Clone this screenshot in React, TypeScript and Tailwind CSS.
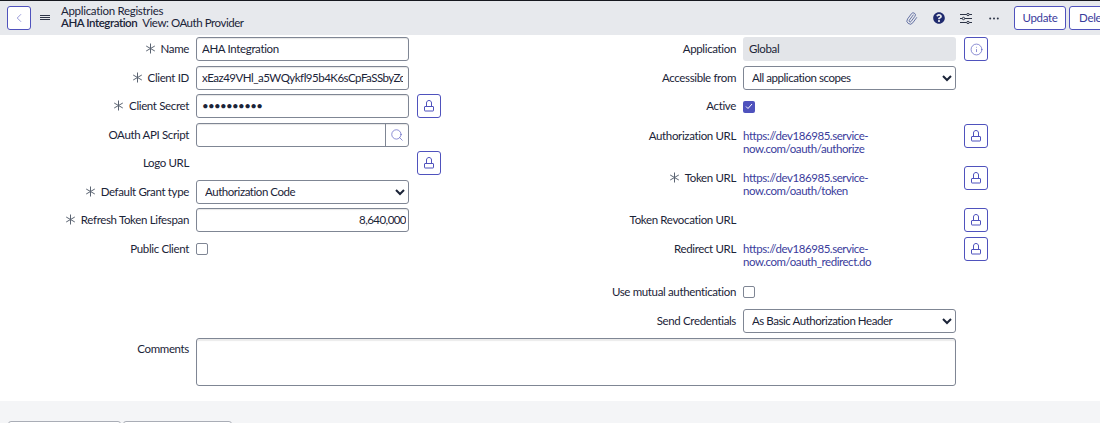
import React from "react";
import { FaQuestionCircle } from "react-icons/fa";
import { Paperclip, ChevronLeft, Search, Info } from "lucide-react";

const Star = () => (
  <svg width="11" height="11" viewBox="0 0 11 11" className="mr-[5px] shrink-0" stroke="#5b6472" strokeWidth="1" fill="none">
    <path d="M5.5 0.5V10.5M1.2 3L9.8 8M9.8 3L1.2 8" />
  </svg>
);

const LockBtn = () => (
  <button className="w-[24px] h-[24px] rounded-[3px] border border-[#4f52bd] flex items-center justify-center bg-white shrink-0">
    <svg width="10" height="12" viewBox="0 0 10 12" fill="none" stroke="#4f52bd" strokeWidth="1">
      <path d="M2.5 6.5V3C2.5 1.5 3.5 0.5 5 0.5C6.5 0.5 7.5 1.5 7.5 3V6.5" />
      <rect x="0.5" y="6.5" width="9" height="4.5" rx="0.5" />
    </svg>
  </button>
);

const inputCls =
  "w-[213px] h-[24px] rounded-[3px] border border-[#7f8694] bg-white text-[11.5px] tracking-[-0.35px] text-[#1b2438] px-[5px] pb-[1px] shadow-[inset_0_1px_1px_rgba(0,0,0,0.1)] outline-none";
const selectCls =
  "w-[213px] h-[24px] rounded-[3px] border border-[#7f8694] bg-white text-[11.5px] tracking-[-0.45px] text-[#1b2438] pl-[4px] pb-[1px] outline-none";

function Label({ text, req, w }: { text: string; req?: boolean; w: string }) {
  return (
    <div className={`${w} shrink-0 flex items-center justify-end text-[11.5px] tracking-[-0.35px] text-[#1b2438] mr-[7px] h-[24px] pb-[1px] whitespace-nowrap`}>
      {req && <Star />}
      {text}
    </div>
  );
}

function LRow({ text, req, h, lock, children }: { text: string; req?: boolean; h: string; lock?: boolean; children?: React.ReactNode }) {
  return (
    <div className={`flex items-start ${h}`}>
      <Label text={text} req={req} w="w-[189px]" />
      <div className="w-[213px] shrink-0 h-[24px] flex items-center">{children}</div>
      {lock && <div className="ml-[8px]"><LockBtn /></div>}
    </div>
  );
}

function RRow({ text, req, h, btn, children }: { text: string; req?: boolean; h: string; btn?: React.ReactNode; children?: React.ReactNode }) {
  return (
    <div className={`flex items-start ${h}`}>
      <Label text={text} req={req} w="w-[186px]" />
      <div className="w-[213px] shrink-0 min-h-[24px] flex items-center">{children}</div>
      {btn && <div className="ml-[8px]">{btn}</div>}
    </div>
  );
}

const Link2 = ({ a, b }: { a: string; b: string }) => (
  <div className="text-[11.5px] tracking-[-0.45px] leading-[13.3px] text-[#3a3c9c] pt-[5px]">
    <div>{a}</div>
    <div>{b}</div>
  </div>
);

const Check = ({ on }: { on?: boolean }) =>
  on ? (
    <span className="w-[12px] h-[12px] rounded-[2px] bg-[#4f52bd] flex items-center justify-center">
      <svg width="8" height="7" viewBox="0 0 8 7" fill="none" stroke="#fff" strokeWidth="1"><path d="M1 3.5L3 5.5L7 1" /></svg>
    </span>
  ) : (
    <span className="w-[12px] h-[12px] rounded-[2px] border border-[#7f8694] bg-white block" />
  );

export default function App() {
  return (
    <div className="w-[1100px] h-[423px] overflow-hidden bg-white flex flex-col font-['Lato','Noto_Sans',sans-serif] text-[#1b2438]">
      <header className="h-[35px] shrink-0 bg-[#e7e9ed] border-t border-[#16181f] flex items-center pl-[7px] whitespace-nowrap">
        <button className="w-[24px] h-[24px] rounded-[3px] border border-[#4f52bd] bg-white flex items-center justify-center">
          <ChevronLeft size={14} strokeWidth={1} color="#4f52bd" />
        </button>
        <svg width="10" height="6" viewBox="0 0 10 6" stroke="#2e3547" strokeWidth="1" className="ml-[9px]"><path d="M0 .5H10M0 2.5H10M0 4.5H10" /></svg>
        <div className="ml-[11px] text-[11.5px] tracking-[-0.3px] leading-[12px] pb-[2px]">
          <div>Application Registries</div>
          <div className="tracking-[-0.45px]"><span className="font-semibold">AHA Integration</span><span className="ml-[5px]">View: OAuth Provider</span></div>
        </div>
        <div className="flex-1" />
        <Paperclip size={13} strokeWidth={1.3} color="#3a4a8c" className="-rotate-[8deg]" />
        <FaQuestionCircle size={12} color="#1f2a6e" className="ml-[15px]" />
        <svg width="12" height="11" viewBox="0 0 12 11" fill="none" stroke="#2e3547" strokeWidth="1" className="ml-[15px]">
          <path d="M0 1.5H12M0 5.5H12M0 9.5H12" />
          <circle cx="8" cy="1.5" r="1.2" fill="#e7e9ed" />
          <circle cx="3.5" cy="5.5" r="1.2" fill="#e7e9ed" />
          <circle cx="8" cy="9.5" r="1.2" fill="#e7e9ed" />
        </svg>
        <svg width="10" height="3" viewBox="0 0 10 3" fill="#2e3547" className="ml-[17px]">
          <circle cx="1.2" cy="1.5" r="1" /><circle cx="5" cy="1.5" r="1" /><circle cx="8.8" cy="1.5" r="1" />
        </svg>
        <button className="ml-[15px] w-[52px] h-[24px] rounded-[3px] border border-[#4f52bd] bg-white text-[11.5px] tracking-[-0.3px] text-[#3a3c9c] shrink-0">Update</button>
        <button className="ml-[3px] w-[52px] h-[24px] rounded-[3px] border border-[#4f52bd] bg-white text-[11.5px] tracking-[-0.3px] text-[#3a3c9c] shrink-0 mr-[-21px]">Delete</button>
      </header>

      <main className="pt-[2px] h-[366px] shrink-0">
        <div className="flex h-[301px]">
          <div className="w-[550px] shrink-0">
            <LRow text="Name" req h="h-[29px]"><input className={inputCls} readOnly value="AHA Integration" /></LRow>
            <LRow text="Client ID" req h="h-[28px]"><input className={`${inputCls} !tracking-[-0.5px]`} readOnly value="xEaz49VHl_a5WQykfl95b4K6sCpFaSSbyZcGd" /></LRow>
            <LRow text="Client Secret" req h="h-[29px]" lock><input type="password" className={`${inputCls} !tracking-[-0.65px]`} readOnly value="abcdefghij" /></LRow>
            <LRow text="OAuth API Script" h="h-[28px]">
              <div className="w-[213px] h-[24px] rounded-[3px] border border-[#7f8694] bg-white flex shadow-[inset_0_1px_1px_rgba(0,0,0,0.1)]">
                <div className="flex-1" />
                <div className="w-[23px] border-l border-[#7f8694] flex items-center justify-center">
                  <Search size={14} strokeWidth={1.1} color="#4f52bd" />
                </div>
              </div>
            </LRow>
            <LRow text="Logo URL" h="h-[29px]" lock />
            <LRow text="Default Grant type" req h="h-[28px]">
              <select className={selectCls} defaultValue="a"><option value="a">Authorization Code</option></select>
            </LRow>
            <LRow text="Refresh Token Lifespan" req h="h-[29px]">
              <input className={`${inputCls} text-right !pr-[2px] !tracking-[-0.55px]`} readOnly value="8,640,000" />
            </LRow>
            <LRow text="Public Client" h="h-[24px]"><Check /></LRow>
          </div>
          <div className="flex-1">
            <RRow text="Application" h="h-[29px]" btn={
              <button className="w-[24px] h-[24px] rounded-[3px] border border-[#4f52bd] bg-white flex items-center justify-center">
                <Info size={13} strokeWidth={1.2} color="#4f52bd" />
              </button>}>
              <div className="w-[213px] h-[24px] rounded-[3px] bg-[#e3e5e9] text-[11.5px] tracking-[-0.35px] flex items-center px-[6px] pb-[1px]">Global</div>
            </RRow>
            <RRow text="Accessible from" h="h-[28px]">
              <select className={selectCls} defaultValue="a"><option value="a">All application scopes</option></select>
            </RRow>
            <RRow text="Active" h="h-[30px]"><div className="pt-[1px]"><Check on /></div></RRow>
            <RRow text="Authorization URL" h="h-[42px]" btn={<LockBtn />}>
              <Link2 a="https://dev186985.service-" b="now.com/oauth/authorize" />
            </RRow>
            <RRow text="Token URL" req h="h-[42px]" btn={<LockBtn />}>
              <Link2 a="https://dev186985.service-" b="now.com/oauth/token" />
            </RRow>
            <RRow text="Token Revocation URL" h="h-[29px]" btn={<LockBtn />} />
            <RRow text="Redirect URL" h="h-[43px]" btn={<LockBtn />}>
              <Link2 a="https://dev186985.service-" b="now.com/oauth_redirect.do" />
            </RRow>
            <RRow text="Use mutual authentication" h="h-[29px]"><Check /></RRow>
            <RRow text="Send Credentials" h="h-[29px]">
              <select className={selectCls} defaultValue="a"><option value="a">As Basic Authorization Header</option></select>
            </RRow>
          </div>
        </div>
        <div className="flex items-start">
          <div className="w-[189px] shrink-0 mr-[7px] text-right text-[11.5px] tracking-[-0.35px] leading-[22px]">Comments</div>
          <div className="w-[760px] h-[48px] rounded-[3px] border border-[#7f8694] bg-white shadow-[inset_0_2px_1px_rgba(0,0,0,0.08)]" />
        </div>
      </main>

      <footer className="flex-1 bg-[#f4f5f7] flex items-start pl-[8px] pt-[20px] gap-[2px]">
        <div className="w-[113px] h-[4px] rounded-t-[3px] border border-[#a9adb6] bg-white" />
        <div className="w-[109px] h-[4px] rounded-t-[3px] border border-[#a9adb6] bg-white" />
      </footer>
    </div>
  );
}
